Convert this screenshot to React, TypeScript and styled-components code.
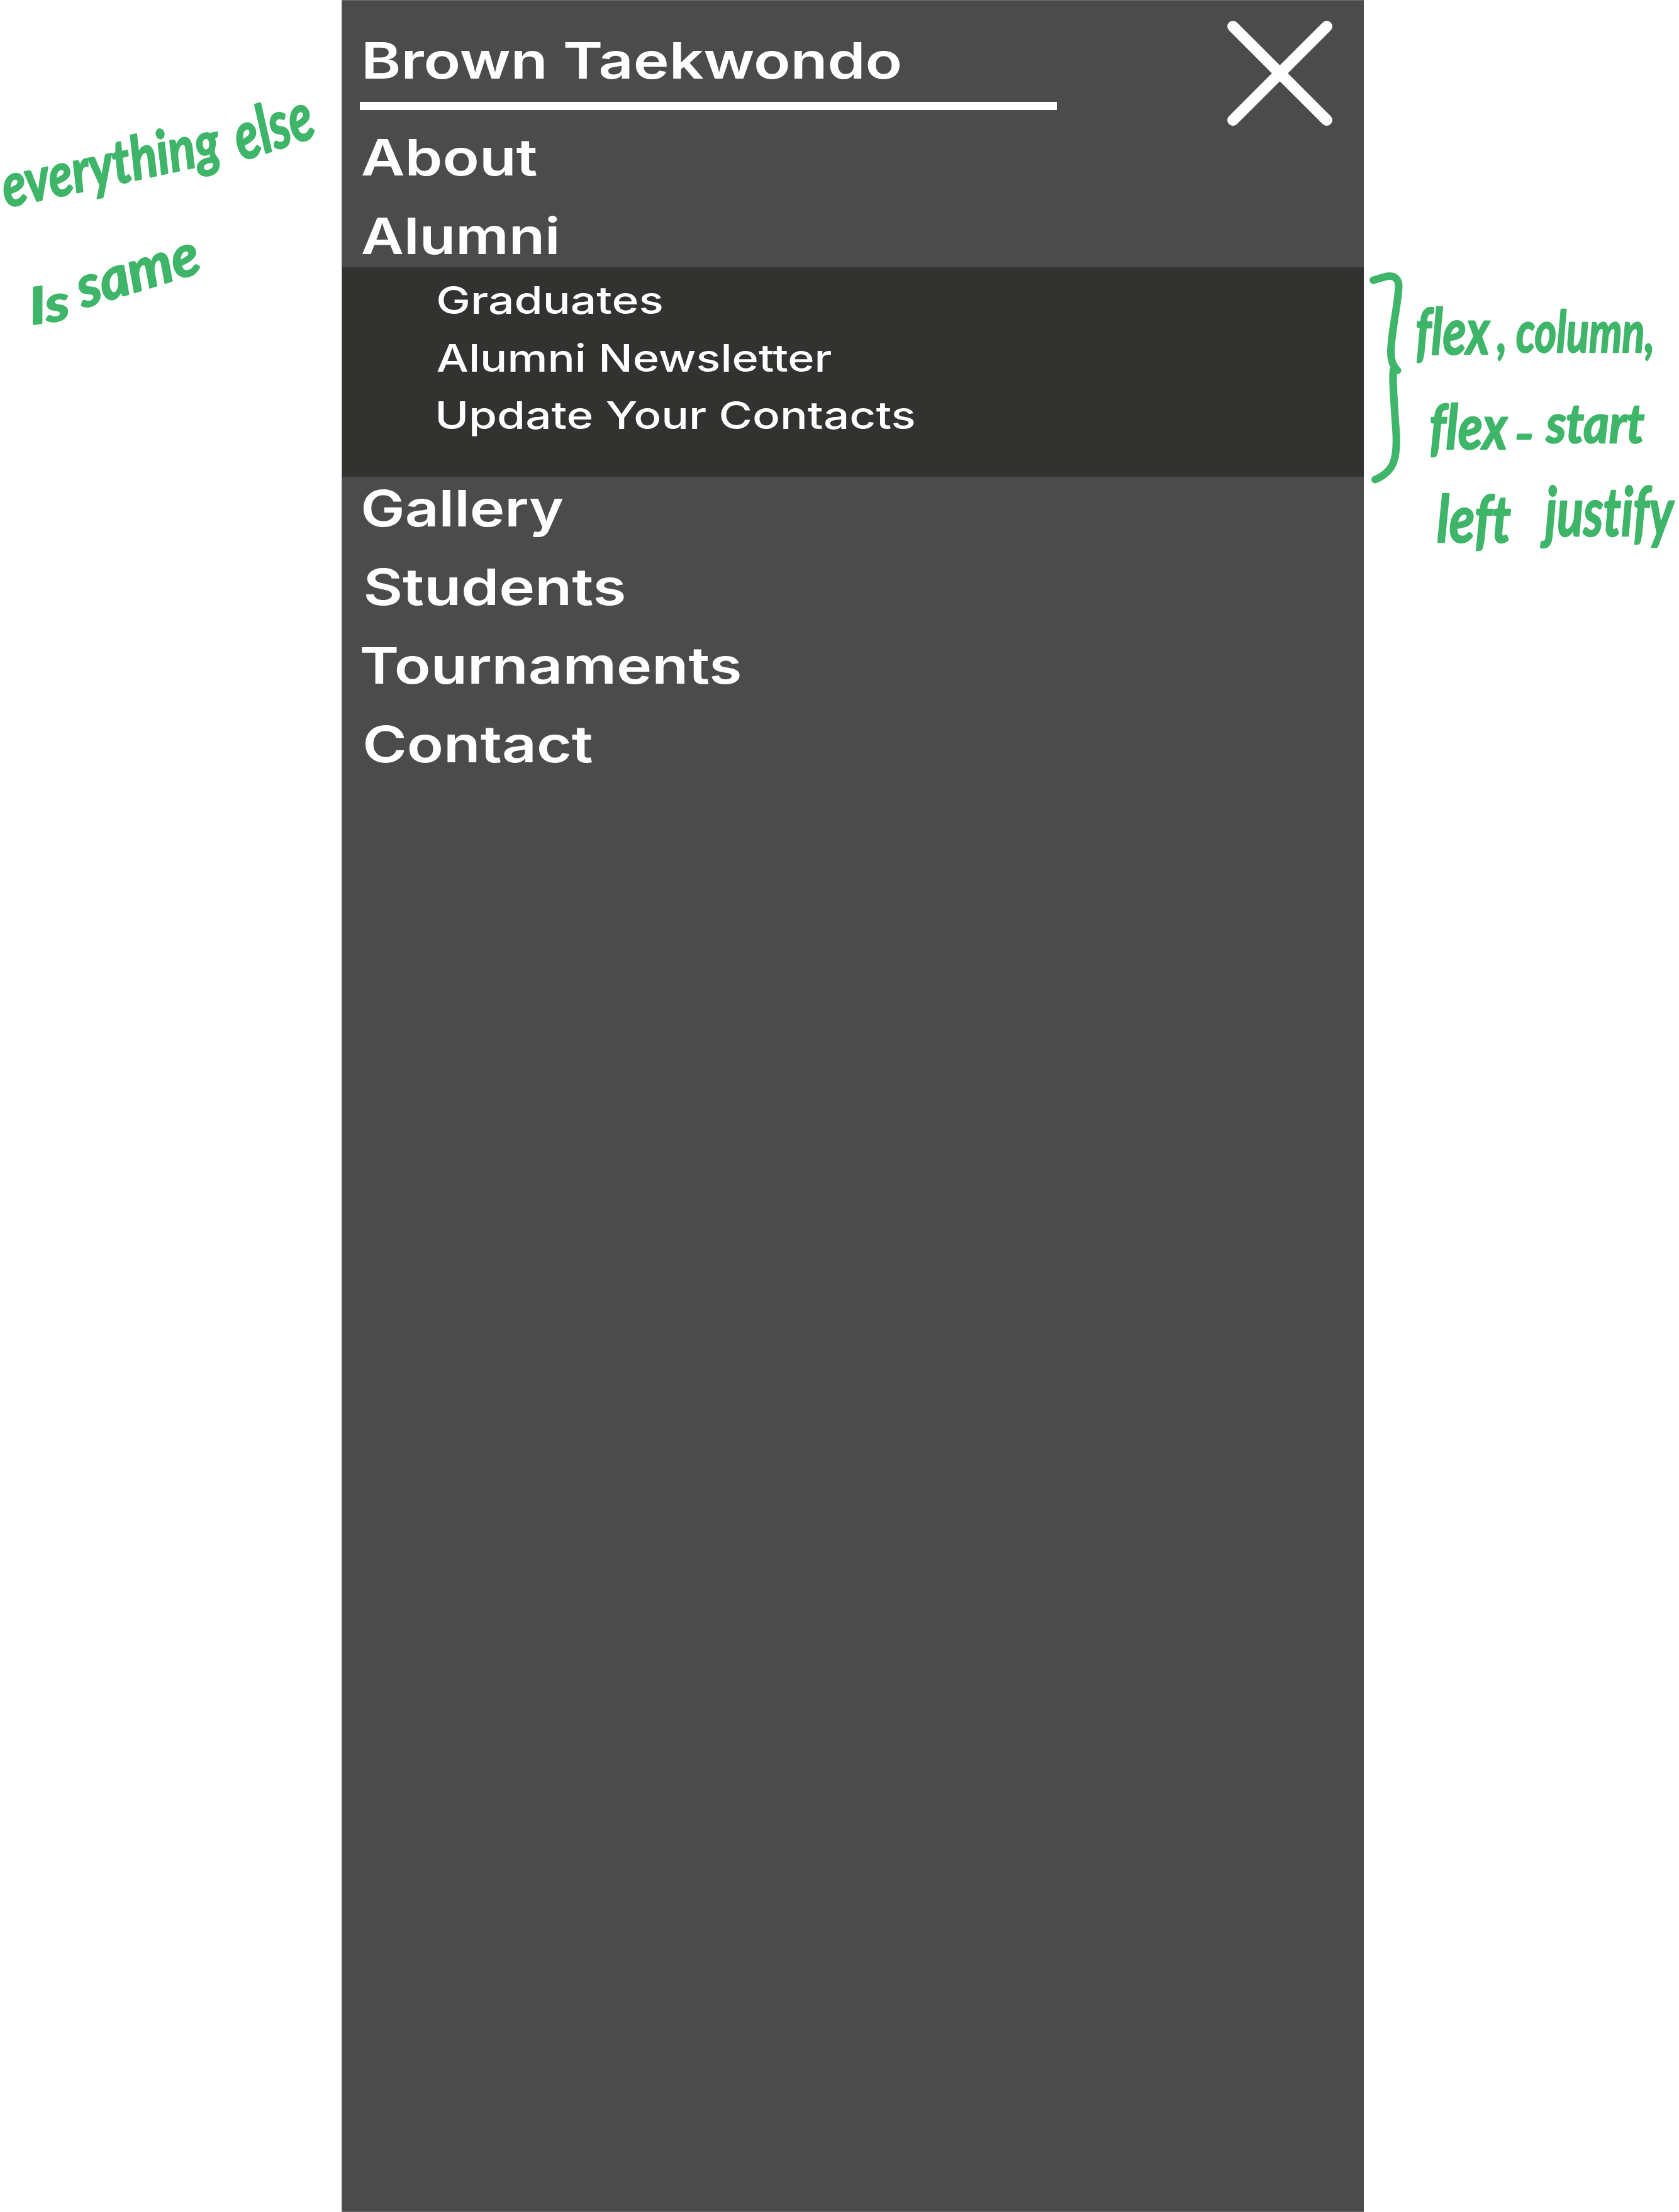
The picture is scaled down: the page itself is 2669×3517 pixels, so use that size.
import React, { useLayoutEffect, useRef, useState } from "react";
import styled, { createGlobalStyle } from "styled-components";

const GlobalStyle = createGlobalStyle`
  body { margin: 0; background: #fff; }
  * { box-sizing: border-box; }
`;

const INK = "#3eb569";

const Page = styled.div`
  display: flex;
  width: 2669px;
  height: 3517px;
  background: #fff;
`;

const NoteColumn = styled.svg<{ $width: number }>`
  flex: none;
  width: ${(p) => p.$width}px;
  height: 1000px;
  overflow: visible;
`;

const Handwriting = styled.text<{ $size: number }>`
  font-family: Lato, "Open Sans", sans-serif;
  font-style: italic;
  font-weight: 700;
  font-size: ${(p) => p.$size}px;
  font-variant-ligatures: none;
  fill: ${INK};
  stroke: ${INK};
  stroke-width: 2.5px;
  stroke-linejoin: round;
`;

const Brace = styled.path`
  fill: none;
  stroke: ${INK};
  stroke-width: 12px;
  stroke-linecap: round;
  stroke-linejoin: round;
`;

const Panel = styled.nav`
  flex: none;
  width: 1625px;
  height: 3517px;
  background: #4b4b4b;
  border-top: 1px solid #6f706f;
  border-left: 1px solid #6f706f;
  border-bottom: 1px solid #6f706f;
  color: #fff;
  font-family: Inter, "DejaVu Sans", sans-serif;
`;

const Header = styled.header`
  display: flex;
  justify-content: space-between;
  align-items: flex-start;
  height: 199px;
  padding: 0 50px 0 28px;
`;

const Brand = styled.div`
  display: flex;
  flex-direction: column;
  gap: 16px;
  width: 1108px;
  padding-top: 45px;
`;

const Underline = styled.div`
  height: 13px;
  background: #fff;
`;

const CloseIcon = styled.svg`
  flex: none;
  width: 167px;
  height: 167px;
  margin-top: 32px;
`;

const MenuGroup = styled.div`
  display: flex;
  flex-direction: column;
  align-items: flex-start;
  gap: 25px;
  padding-left: 28px;
`;

const MenuItem = styled.div<{ $indent: number }>`
  height: 100px;
  line-height: 100px;
  padding-left: ${(p) => p.$indent}px;
  font-size: 80px;
  font-weight: 600;
`;

const SubMenu = styled.div`
  display: flex;
  flex-direction: column;
  align-items: flex-start;
  justify-content: flex-start;
  height: 333px;
  padding: 7px 0 0 149px;
  background: #323230;
`;

const SubItem = styled.div<{ $indent: number }>`
  height: 91.5px;
  line-height: 91.5px;
  padding-left: ${(p) => p.$indent}px;
  font-size: 60px;
  font-weight: 500;
`;

const Stretch = styled.span`
  display: inline-block;
  white-space: nowrap;
  transform-origin: 0 50%;
`;

/* Widens a label so that its ink covers exactly the given width. */
function WideLabel({ text, width }: { text: string; width: number }) {
  const ref = useRef<HTMLSpanElement>(null);
  const [fit, setFit] = useState({ scale: 1, shift: 0 });
  useLayoutEffect(() => {
    const ctx = document.createElement("canvas").getContext("2d");
    if (!ref.current || !ctx) return;
    const css = getComputedStyle(ref.current);
    ctx.font = `${css.fontWeight} ${css.fontSize} ${css.fontFamily}`;
    const m = ctx.measureText(text);
    const scale = width / (m.actualBoundingBoxLeft + m.actualBoundingBoxRight);
    setFit({ scale, shift: m.actualBoundingBoxLeft * scale });
  }, [text, width]);
  return (
    <Stretch ref={ref} style={{ transform: `translateX(${fit.shift}px) scaleX(${fit.scale})` }}>
      {text}
    </Stretch>
  );
}

type Entry = { text: string; width: number; indent: number };

const topItems: Entry[] = [
  { text: "About", width: 278, indent: 3 },
  { text: "Alumni", width: 311, indent: 3 },
];
const alumniItems: Entry[] = [
  { text: "Graduates", width: 355, indent: 4 },
  { text: "Alumni Newsletter", width: 626, indent: 2 },
  { text: "Update Your Contacts", width: 757, indent: 3 },
];
const bottomItems: Entry[] = [
  { text: "Gallery", width: 317, indent: 6 },
  { text: "Students", width: 411, indent: 9 },
  { text: "Tournaments", width: 601, indent: 3 },
  { text: "Contact", width: 360, indent: 9 },
];

type Note = { text: string; x: number; y: number; width: number; size: number; angle?: number };

const leftNotes: Note[] = [
  { text: "everything", x: 10, y: 330, width: 352, size: 96, angle: -12 },
  { text: "else", x: 384, y: 256, width: 128, size: 106, angle: -18 },
  { text: "Is", x: 50, y: 516, width: 64, size: 80, angle: -8 },
  { text: "same", x: 132, y: 490, width: 200, size: 92, angle: -17 },
];
const rightNotes: Note[] = [
  { text: "flex", x: 82, y: 563, width: 118, size: 102 },
  { text: ", column,", x: 212, y: 560, width: 250, size: 92 },
  { text: "flex", x: 104, y: 714, width: 124, size: 98 },
  { text: "-", x: 240, y: 716, width: 30, size: 72 },
  { text: "start", x: 290, y: 704, width: 156, size: 86 },
  { text: "left", x: 116, y: 862, width: 118, size: 104 },
  { text: "justify", x: 288, y: 852, width: 204, size: 108 },
];

function Notes({ items }: { items: Note[] }) {
  return (
    <>
      {items.map((n, i) => (
        <Handwriting
          key={i}
          $size={n.size}
          textLength={n.width}
          lengthAdjust="spacingAndGlyphs"
          transform={`translate(${n.x} ${n.y}) rotate(${n.angle ?? 0})`}
        >
          {n.text}
        </Handwriting>
      ))}
    </>
  );
}

function Items({ items }: { items: Entry[] }) {
  return (
    <MenuGroup>
      {items.map((e) => (
        <MenuItem key={e.text} $indent={e.indent}>
          <WideLabel text={e.text} width={e.width} />
        </MenuItem>
      ))}
    </MenuGroup>
  );
}

export default function App() {
  return (
    <Page>
      <GlobalStyle />
      <NoteColumn $width={543} viewBox="0 0 543 1000">
        <Notes items={leftNotes} />
      </NoteColumn>
      <Panel>
        <Header>
          <Brand>
            <MenuItem $indent={8}>
              <WideLabel text="Brown Taekwondo" width={851} />
            </MenuItem>
            <Underline />
          </Brand>
          <CloseIcon viewBox="0 0 167 167">
            <path d="M9 9 158 158M158 9 9 158" stroke="#fff" strokeWidth="18" strokeLinecap="round" />
          </CloseIcon>
        </Header>
        <Items items={topItems} />
        <SubMenu>
          {alumniItems.map((e) => (
            <SubItem key={e.text} $indent={e.indent}>
              <WideLabel text={e.text} width={e.width} />
            </SubItem>
          ))}
        </SubMenu>
        <Items items={bottomItems} />
      </Panel>
      <NoteColumn $width={501} viewBox="0 0 501 1000">
        <Brace d="M15 445.500C28 442 34 439 41 439C50 439 56 445 55.500 456C54 487 43 530 43 560C43 575 47 583 53.500 589L47 588C45 600 48 640 51.500 690C53 730 48 750 18 762.500" />
        <Notes items={rightNotes} />
      </NoteColumn>
    </Page>
  );
}
